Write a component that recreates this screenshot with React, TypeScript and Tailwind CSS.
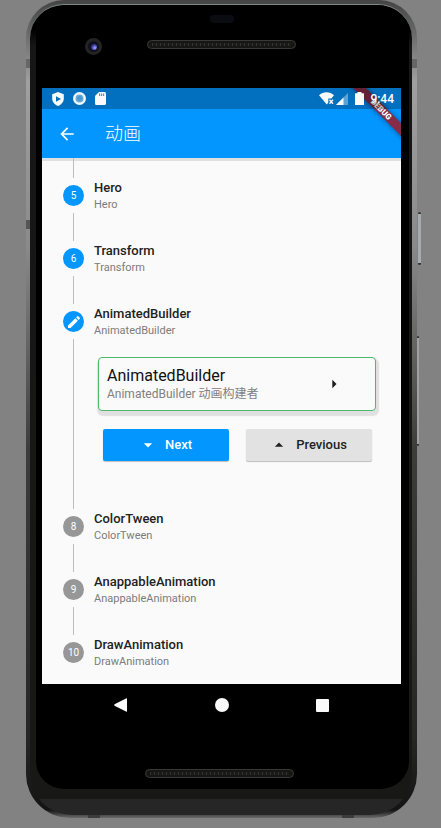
import { MdArrowBack, MdArrowDropDown, MdArrowDropUp, MdArrowRight, MdEdit } from "react-icons/md";

type StepData = { number: number; title: string; subtitle: string; state: "done" | "editing" | "pending" };

const steps: StepData[] = [
  { number: 5, title: "Hero", subtitle: "Hero", state: "done" },
  { number: 6, title: "Transform", subtitle: "Transform", state: "done" },
  { number: 7, title: "AnimatedBuilder", subtitle: "AnimatedBuilder", state: "editing" },
  { number: 8, title: "ColorTween", subtitle: "ColorTween", state: "pending" },
  { number: 9, title: "AnappableAnimation", subtitle: "AnappableAnimation", state: "pending" },
  { number: 10, title: "DrawAnimation", subtitle: "DrawAnimation", state: "pending" },
];

function SpeakerGrille() {
  return (
    <div className="flex h-[9px] w-[149px] items-center rounded-full border border-[#3a3a38] bg-[#161614] px-1">
      <div className="h-[3px] w-full bg-[repeating-linear-gradient(90deg,#34342f_0px,#34342f_1px,#1a1a18_1px,#1a1a18_4px)]" />
    </div>
  );
}

function StatusBar() {
  return (
    <div className="relative z-20 flex h-[21px] items-center bg-black/25 pr-[7px] pl-[10px] text-white">
      <svg width="12" height="14" viewBox="0 0 12 14" aria-hidden="true">
        <path d="M6 0 11.8 2.2V6.5C11.8 10 9.300 12.800 6 14 2.700 12.800.2 10 .2 6.500V2.200Z" fill="#fafafa" />
        <path d="M4 4.300 9 7 4 9.700Z" fill="#0070ba" />
      </svg>
      <svg width="13" height="13" viewBox="0 0 13 13" className="ml-[9px]" aria-hidden="true">
        <circle cx="6.5" cy="6.500" r="6.500" fill="#f2f8fc" />
        <circle cx="6.5" cy="6.500" r="4" fill="#68acd9" />
        <circle cx="6.5" cy="6.500" r="2.400" fill="#4b98cc" />
      </svg>
      <svg width="11" height="13" viewBox="0 0 11 13" className="ml-[9px]" aria-hidden="true">
        <path d="M4 0H9.500Q11 0 11 1.500V11.500Q11 13 9.500 13H1.500Q0 13 0 11.500V4Z" fill="#fafafa" />
        <path d="M4 1.500H5.200V4H4ZM6 1.500H7.200V4H6ZM8 1.500H9.200V4H8Z" fill="#4b98cc" />
      </svg>
      <div className="ml-auto flex items-center">
        <svg width="15" height="13" viewBox="0 0 15 13" aria-hidden="true">
          <path d="M0 3.200C4-.8 11-.8 15 3.200L12.300 6.500H9.300V10.500L7.800 12.400Z" fill="#fafafa" />
          <path d="M10.500 7.800 14 11.800M14 7.800 10.500 11.800" stroke="#fafafa" strokeWidth="1.300" />
        </svg>
        <svg width="12" height="12" viewBox="0 0 12 12" className="ml-[2px]" aria-hidden="true">
          <path d="M12 0V12H0Z" fill="#5ea3d2" />
          <path d="M7.500 4.500V12H0Z" fill="#fafafa" />
        </svg>
        <svg width="9" height="13" viewBox="0 0 9 13" className="ml-[7px]" aria-hidden="true">
          <path d="M2.500 0H6.500V1.300H8.500Q9 1.300 9 1.800V12.500Q9 13 8.500 13H.5Q0 13 0 12.500V1.800Q0 1.300.5 1.300H2.500Z" fill="#fafafa" />
        </svg>
        <time className="ml-[6px] text-[12px] leading-[14px] font-medium">9:44</time>
      </div>
    </div>
  );
}

function StepBadge({ step }: { step: StepData }) {
  return (
    <span
      className={`flex size-[21px] items-center justify-center rounded-full text-[10px] leading-none text-white ${
        step.state === "pending" ? "bg-[#979797]" : "bg-[#0396ff]"
      }`}
    >
      {step.state === "editing" ? <MdEdit size={16} /> : step.number}
    </span>
  );
}

function EditingContent() {
  return (
    <div className="flex-1 pr-[25px] pb-12 pl-[14px]">
      <button
        type="button"
        className="mt-[18px] flex h-[54px] w-full items-center rounded border border-[#4cb96b] bg-[#fafafa] pr-[31px] pl-2 text-left shadow-[1px_3px_1px_2px_#e0e0e0]"
      >
        <span className="flex flex-1 flex-col">
          <span className="text-[16px] leading-[20px] text-[#111111]">AnimatedBuilder</span>
          <span className="text-[12px] leading-[17px] text-[#808080]">AnimatedBuilder 动画构建者</span>
        </span>
        <MdArrowRight size={20} color="#1c1c1c" />
      </button>
      <div className="mt-[18px] flex gap-[17px] pr-1 pl-[5px] text-[13px] font-medium">
        <button
          type="button"
          className="flex h-8 flex-1 items-center justify-center gap-[7px] rounded-[2px] bg-[#0396ff] pr-[2px] text-white shadow-[0_1px_1px_#bdbdbd]"
        >
          <MdArrowDropDown size={20} />
          Next
        </button>
        <button
          type="button"
          className="flex h-8 flex-1 items-center justify-center gap-[7px] rounded-[2px] bg-[#e2e2e2] pr-[2px] text-[#222222] shadow-[0_1px_1px_#bdbdbd]"
        >
          <MdArrowDropUp size={20} />
          Previous
        </button>
      </div>
    </div>
  );
}

function StepItem({ step, last }: { step: StepData; last: boolean }) {
  return (
    <li>
      <div className="flex h-[35px] items-center gap-[10px]">
        <StepBadge step={step} />
        <div className="pt-px">
          <h2 className="text-[13px] leading-[18px] font-medium text-[#222222]">{step.title}</h2>
          <p className="text-[11px] leading-[16px] text-[#7c7c7c]">{step.subtitle}</p>
        </div>
      </div>
      {!last && (
        <div className="flex">
          <div className="flex w-[21px] justify-center">
            <div className="min-h-7 w-px bg-[#bdbdbd]" />
          </div>
          {step.state === "editing" && <EditingContent />}
        </div>
      )}
    </li>
  );
}

function AppScreen() {
  return (
    <div className="relative overflow-hidden bg-[#fafafa]">
      <div className="bg-[#0396ff] shadow-[0_3px_0_#e0e0e0]">
        <StatusBar />
        <header className="flex h-[49px] items-center gap-[28px] pl-[15px] text-white">
          <button type="button" aria-label="Back">
            <MdArrowBack size={20} />
          </button>
          <h1 className="text-[18px] leading-6 font-light">动画</h1>
        </header>
      </div>
      <main className="pb-[14px] pl-[21px]">
        <div className="flex h-5 w-[21px] justify-center">
          <div className="w-px bg-[#bdbdbd]" />
        </div>
        <ol>
          {steps.map((step, i) => (
            <StepItem key={step.number} step={step} last={i === steps.length - 1} />
          ))}
        </ol>
      </main>
      <div className="absolute top-[17px] -right-[30px] z-10 h-[9px] w-[100px] rotate-45 bg-[#862c48] text-center text-[8px] leading-[9px] font-black text-white shadow-[0_0_5px_#00000080]">
        DEBUG
      </div>
    </div>
  );
}

function NavigationBar() {
  return (
    <nav className="grid h-[42px] grid-cols-3 items-center justify-items-center px-7">
      <button type="button" aria-label="Back">
        <svg width="13" height="14" viewBox="0 0 13 14">
          <path d="M13 .5V13.500Q13 14 12.500 13.800L.5 7.700Q0 7 .5 6.300L12.500.2Q13 0 13 .5Z" fill="#fafafa" />
        </svg>
      </button>
      <button type="button" aria-label="Home" className="size-[14px] rounded-full bg-[#fafafa]" />
      <button type="button" aria-label="Recent apps" className="size-[13px] rounded-[1px] bg-[#fafafa]" />
    </nav>
  );
}

export default function App() {
  return (
    <div className="min-h-screen bg-[#828282] pr-6 pb-[10px] pl-[26px] font-['Roboto','Noto_Sans_CJK_SC',sans-serif]">
      <div className="relative rounded-t-[38px] rounded-b-[44px] bg-[linear-gradient(#444_0,#a0a0a0_10%,#8a8a8a_30%,#3c3c3c_55%,#262626_90%,#141414_99%,#6a6a6a_100%)] pt-1 pr-[5px] pb-[3px] pl-1">
        <div className="absolute top-[212px] -right-[4px] h-[53px] w-[3px] rounded border-y-2 border-[#333333] bg-[#a4acac]" />
        <div className="absolute top-[336px] -right-[2px] h-[110px] w-[2px] rounded border-y-2 border-[#333333] bg-[#a0a0a0]" />
        <div className="absolute top-[59px] left-0 h-[9px] w-[5px] bg-[#666666]" />
        <div className="absolute top-[220px] left-0 h-[9px] w-[5px] bg-[#555555]" />
        <div className="absolute top-[59px] right-0 h-[9px] w-[5px] bg-[#666666]" />
        <div className="absolute bottom-0 left-[62px] h-[3px] w-3 bg-[#3c3c3c]" />
        <div className="absolute right-[63px] bottom-0 h-[3px] w-3 bg-[#3c3c3c]" />
        <div className="relative rounded-t-[34px] rounded-b-[42px] border-t border-[#7c8888] bg-[linear-gradient(#000_0,#000_3%,#161616_5%,#181816_98%,#262626_98%)] pr-[3px] pb-[26px] pl-[6px]">
          <div className="rounded-t-[32px] rounded-b-[28px] bg-black pr-2 pl-[6px]">
            <div className="relative flex h-[83px] flex-col items-center pt-[10px]">
              <div className="h-2 w-6 rounded-full bg-[#0b0b12]" />
              <div className="mt-[17px]">
                <SpeakerGrille />
              </div>
              <div className="absolute top-[33px] left-[43px] flex size-[17px] items-center justify-center rounded-full border-[3px] border-[#242424] bg-[#101020]">
                <div className="size-[6px] rounded-full bg-[radial-gradient(circle_at_65%_65%,#b4b4ff_0,#5a5ad0_35%,#20205a_80%)]" />
              </div>
            </div>
            <AppScreen />
            <NavigationBar />
            <div className="flex h-[63px] justify-center pt-[43px] pr-1">
              <SpeakerGrille />
            </div>
          </div>
        </div>
      </div>
    </div>
  );
}
